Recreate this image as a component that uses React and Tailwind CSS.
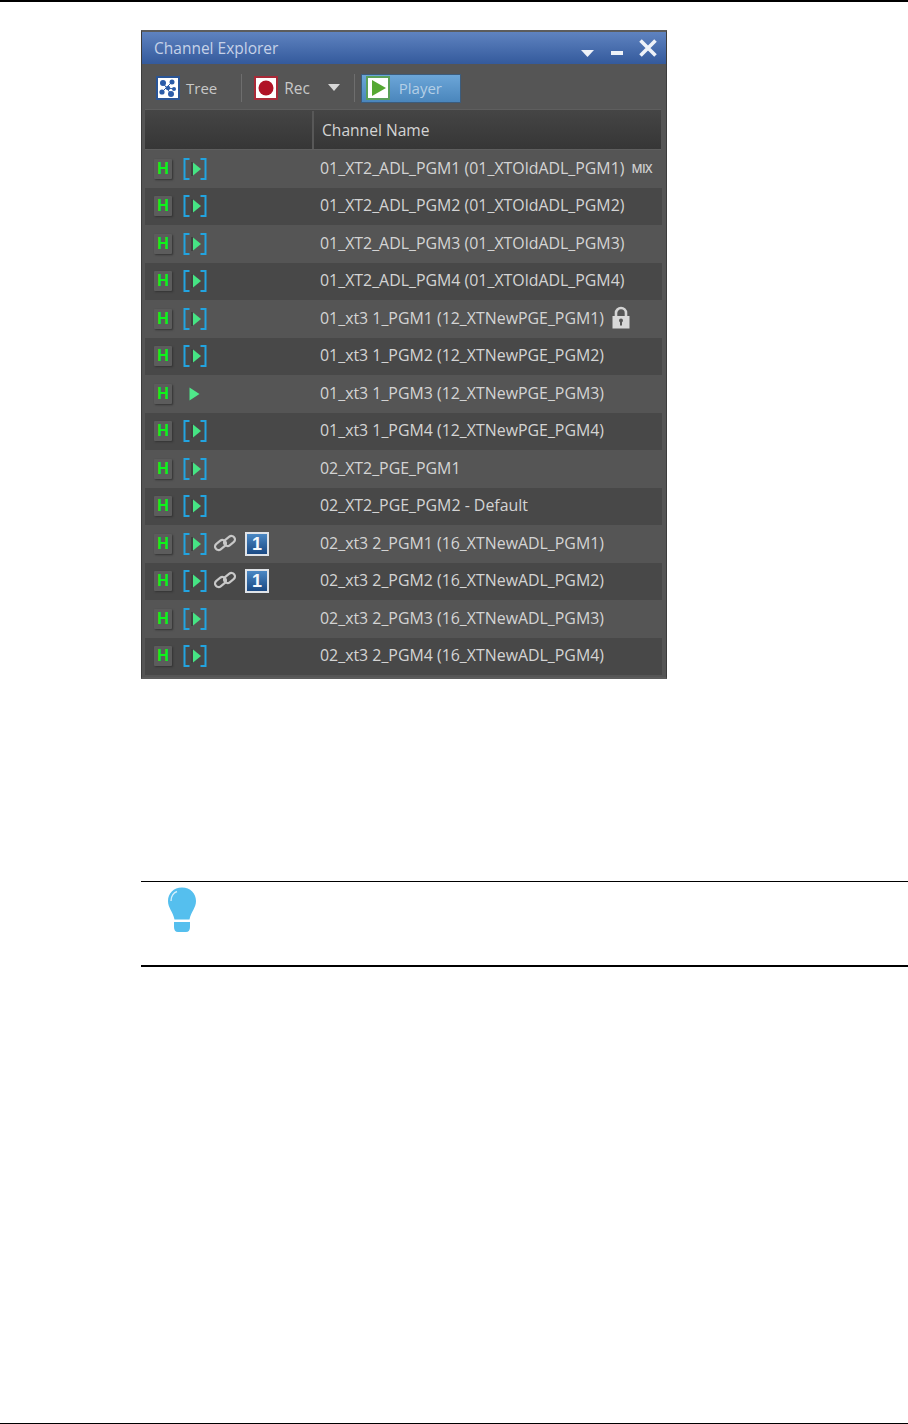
const channels = [
  { name: '01_XT2_ADL_PGM1 (01_XTOldADL_PGM1)', mix: true },
  { name: '01_XT2_ADL_PGM2 (01_XTOldADL_PGM2)' },
  { name: '01_XT2_ADL_PGM3 (01_XTOldADL_PGM3)' },
  { name: '01_XT2_ADL_PGM4 (01_XTOldADL_PGM4)' },
  { name: '01_xt3 1_PGM1 (12_XTNewPGE_PGM1)', lock: true },
  { name: '01_xt3 1_PGM2 (12_XTNewPGE_PGM2)' },
  { name: '01_xt3 1_PGM3 (12_XTNewPGE_PGM3)', playing: true },
  { name: '01_xt3 1_PGM4 (12_XTNewPGE_PGM4)' },
  { name: '02_XT2_PGE_PGM1' },
  { name: '02_XT2_PGE_PGM2 - Default' },
  { name: '02_xt3 2_PGM1 (16_XTNewADL_PGM1)', linked: true },
  { name: '02_xt3 2_PGM2 (16_XTNewADL_PGM2)', linked: true },
  { name: '02_xt3 2_PGM3 (16_XTNewADL_PGM3)' },
  { name: '02_xt3 2_PGM4 (16_XTNewADL_PGM4)' },
];

function HoldBadge() {
  return (
    <div className="w-[18px] h-[20px] bg-[#5c5c5c] rounded-[1px] shadow-[1px_1px_2px_#333333] flex items-center justify-center text-[16px] leading-none font-bold text-[#0cf51a] font-['Liberation_Sans',sans-serif]">
      H
    </div>
  );
}

function PlayTriangle() {
  return (
    <svg width="11" height="14" viewBox="0 0 11 14">
      <path d="M0.5 0.5 L10.5 7 L0.5 13.5 Z" fill="#4fe88a" />
    </svg>
  );
}

function BracketPlay() {
  return (
    <svg width="24" height="24" viewBox="0 0 24 24">
      <path d="M6.5 2 H1.5 V22 H6.5" fill="none" stroke="#22a4e0" strokeWidth="2" />
      <path d="M17.5 2 H22.5 V22 H17.5" fill="none" stroke="#22a4e0" strokeWidth="2" />
      <rect x="8" y="5" width="2" height="14" fill="#404040" />
      <path d="M10 5.5 L18 12 L10 18.5 Z" fill="#46e484" />
    </svg>
  );
}

function LinkIcon() {
  return (
    <svg width="24" height="20" viewBox="0 0 24 20" fill="none" stroke="#c8c8c8" strokeWidth="2.2">
      <rect x="1.5" y="8.5" width="12" height="7" rx="3.5" transform="rotate(-38 7.5 12)" />
      <rect x="10.5" y="4.5" width="12" height="7" rx="3.5" transform="rotate(-38 16.5 8)" />
    </svg>
  );
}

function NumberBadge() {
  return (
    <div className="w-[24px] h-[24px] border-2 border-[#dfe3e8] bg-gradient-to-b from-[#4a88c4] to-[#1b4a84] flex items-center justify-center text-[18px] leading-none font-bold text-[#f4f8fc] font-['Liberation_Sans',sans-serif]">
      1
    </div>
  );
}

function LockIcon() {
  return (
    <svg width="20" height="24" viewBox="0 0 20 24" className="ml-[7px] -mt-[2px]">
      <path d="M5 11 V7 a5 5 0 0 1 10 0 V11" fill="none" stroke="#d4d4d4" strokeWidth="2.6" />
      <path d="M1.5 10 H18.5 V22.5 H1.5 Z" fill="#d8d8d8" />
      <circle cx="10" cy="14.5" r="2" fill="#555" />
      <rect x="9" y="15" width="2" height="4.5" fill="#555" />
    </svg>
  );
}

function TreeIcon() {
  return (
    <svg width="24" height="24" viewBox="0 0 24 24">
      <rect x="1" y="1" width="22" height="22" fill="#fff" stroke="#2a5596" strokeWidth="2" />
      <g fill="#2a5ba8">
        <circle cx="7" cy="7" r="3" />
        <circle cx="16" cy="6" r="2.5" />
        <circle cx="12" cy="12" r="2.2" />
        <circle cx="18" cy="13" r="2" />
        <circle cx="6" cy="16" r="2.6" />
        <circle cx="15" cy="18" r="3" />
      </g>
      <path d="M7 7 L15 18 M16 6 L6 16 M12 12 L18 13" stroke="#2a5ba8" strokeWidth="1" />
    </svg>
  );
}

function RecIcon() {
  return (
    <svg width="24" height="24" viewBox="0 0 24 24">
      <rect x="1" y="1" width="22" height="22" fill="#fff" stroke="#a82a38" strokeWidth="2" />
      <circle cx="12" cy="12" r="7.5" fill="#b01226" />
    </svg>
  );
}

function PlayerIcon() {
  return (
    <svg width="24" height="24" viewBox="0 0 24 24">
      <rect x="1" y="1" width="22" height="22" fill="#fff" stroke="#5aa05a" strokeWidth="2" />
      <path d="M6 4 L20 12 L6 20 Z" fill="#55a832" />
    </svg>
  );
}

function BulbIcon() {
  return (
    <svg width="30" height="46" viewBox="0 0 30 46">
      <path
        d="M15 0.5 C6.5 0.5 1 6.5 1 14 C1 21 6 24.5 7.5 32.5 H22.5 C24 24.5 29 21 29 14 C29 6.5 23.5 0.5 15 0.5 Z"
        fill="#55bfee"
      />
      <path d="M4 14 C4 9 7 5.5 10 4.5" fill="none" stroke="#d4effb" strokeWidth="1.4" />
      <path d="M7 35 H23 V40 Q23 45 19 45 H11 Q7 45 7 40 Z" fill="#55bfee" />
    </svg>
  );
}

function ChannelRow({ channel, even }) {
  return (
    <div className={`flex items-center h-[37.5px] ${even ? 'bg-[#484848]' : 'bg-[#555555]'}`}>
      <div className="w-[175px] pl-[9px] flex items-center shrink-0">
        <HoldBadge />
        {channel.playing ? (
          <div className="ml-[17px]">
            <PlayTriangle />
          </div>
        ) : (
          <div className="ml-[11px]">
            <BracketPlay />
          </div>
        )}
        {channel.linked && (
          <>
            <div className="ml-[6px] -mt-[2px]">
              <LinkIcon />
            </div>
            <div className="ml-[8px]">
              <NumberBadge />
            </div>
          </>
        )}
      </div>
      <span className="text-[#d4d4d4] text-[15.9px] whitespace-nowrap">{channel.name}</span>
      {channel.mix && (
        <span className="ml-[7px] text-[12px] font-semibold text-[#cfcfcf] tracking-[-0.6px]">MIX</span>
      )}
      {channel.lock && <LockIcon />}
    </div>
  );
}

export default function App() {
  return (
    <div className="h-[1424px] bg-white flex flex-col font-['Open_Sans',sans-serif] text-[15px]">
      <div className="h-[2px] bg-black shrink-0" />

      {/* Channel Explorer panel */}
      <div className="ml-[141px] mt-[28px] w-[526px] h-[649px] shrink-0 border-2 border-[#5c5c5c] border-x-[1px] border-x-[#3c3c3c] bg-[#555555] flex flex-col">
        <div className="h-[32px] shrink-0 bg-gradient-to-b from-[#5f83c0] to-[#345a9c] flex items-center pl-[12px] pr-[8px]">
          <span className="text-[#c6d2e8] text-[15.5px] mt-[1px]">Channel Explorer</span>
          <div className="ml-auto flex items-center">
            <svg width="13" height="7" viewBox="0 0 13 7" className="mt-[10px]">
              <path d="M0 0 H13 L6.5 7 Z" fill="#eef2f8" />
            </svg>
            <div className="ml-[17px] mt-[10px] w-[12px] h-[4px] bg-[#eef2f8]" />
            <svg width="20" height="18" viewBox="0 0 20 18" className="ml-[15px]">
              <path d="M2.5 1.5 L17.5 16.5 M17.5 1.5 L2.5 16.5" stroke="#eef2f8" strokeWidth="3.6" />
            </svg>
          </div>
        </div>

        {/* Toolbar */}
        <div className="h-[45px] shrink-0 flex items-center pl-[14px] pt-[3px]">
          <TreeIcon />
          <span className="ml-[6px] text-[#c8c8c8]">Tree</span>
          <div className="ml-[24px] w-[1px] h-[28px] bg-[#6e6e6e]" />
          <div className="ml-[12px]">
            <RecIcon />
          </div>
          <span className="ml-[6px] mt-[1px] text-[#c8c8c8] text-[15.4px]">Rec</span>
          <svg width="12" height="7" viewBox="0 0 12 7" className="ml-[18px] -mt-[2px]">
            <path d="M0 0 H12 L6 7 Z" fill="#d8d8d8" />
          </svg>
          <div className="ml-[14px] w-[1px] h-[28px] bg-[#6e6e6e]" />
          <div className="ml-[6px] w-[100px] h-[29px] bg-gradient-to-b from-[#6ca6d8] to-[#4a86bc] border border-[#3c5c7c] flex items-center pl-[4px]">
            <PlayerIcon />
            <span className="ml-[9px] text-[#b4cfe6]">Player</span>
          </div>
        </div>

        {/* Table */}
        <div className="ml-[3px] mr-[4px] flex-1 flex flex-col">
          <div className="h-[41px] shrink-0 mr-[1px] pt-[1px] bg-gradient-to-b from-[#454545] to-[#363636] border-y border-[#5e5e5e] flex">
            <div className="w-[169px] border-r-2 border-[#585858]" />
            <div className="pl-[8px] pt-[1px] flex items-center text-[#d4d4d4] text-[15.6px]">Channel Name</div>
          </div>
          {channels.map((channel, i) => (
            <ChannelRow key={channel.name} channel={channel} even={i % 2 === 1} />
          ))}
        </div>
      </div>

      {/* Tip callout */}
      <div className="ml-[141px] mt-[202px] h-[86px] shrink-0 border-t border-b-2 border-black pt-[5px] pl-[26px]">
        <BulbIcon />
      </div>

      <div className="mt-auto h-[1px] bg-black shrink-0" />
    </div>
  );
}
